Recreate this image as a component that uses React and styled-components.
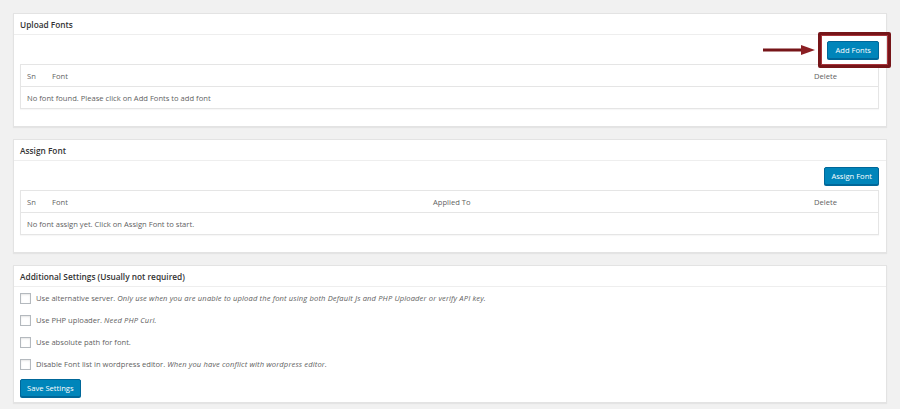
import React from 'react'
import styled, { createGlobalStyle } from 'styled-components'

const GlobalStyle = createGlobalStyle`
  html, body {
    margin: 0;
    background: #f1f1f1;
    font-family: "Open Sans", "Noto Sans", sans-serif;
    color: #444;
  }
`

const Page = styled.div`
  padding: 13px 13px 6px 13px;
  display: flex;
  flex-direction: column;
  gap: 12px;
`

const Panel = styled.div`
  background: #fff;
  border: 1px solid #e3e3e3;
  box-shadow: 0 1px 1px rgba(0, 0, 0, 0.05);
`

const PanelHeader = styled.div`
  height: 20px;
  display: flex;
  align-items: center;
  padding-left: 6px;
  border-bottom: 1px solid #eee;
  font-size: 8.3px;
  font-weight: 600;
  color: #333;
`

const PanelBody = styled.div`
  padding: ${(p) => p.$pad || '6px 7px 17px 6px'};
`

const Toolbar = styled.div`
  position: relative;
  display: flex;
  justify-content: flex-end;
  margin-bottom: 5px;
`

const Button = styled.button`
  height: 18px;
  padding: 0 ${(p) => p.$px || 7}px;
  background: #0085ba;
  border: 1px solid #006799;
  border-radius: 2px;
  box-shadow: 0 1px 0 #006799;
  color: #fff;
  font-family: inherit;
  font-size: 7.6px;
  line-height: 16px;
  cursor: pointer;
`

const Highlight = styled.div`
  position: absolute;
  right: -12px;
  top: -9px;
  width: 73px;
  height: 36px;
  border: 3px solid #761519;
  box-shadow: inset 0 0 0 1px #a8333a;
  border-radius: 2px;
  box-sizing: border-box;
  pointer-events: none;
`

const Arrow = styled.svg`
  position: absolute;
  right: 64px;
  top: 3px;
`

const Table = styled.div`
  border: 1px solid #e5e5e5;
  box-shadow: 0 1px 1px rgba(0, 0, 0, 0.03);
`

const Row = styled.div`
  display: grid;
  grid-template-columns: ${(p) => p.$cols};
  align-items: center;
  height: 21px;
  padding-left: 6px;
  font-size: 7.6px;
  color: #5f5f5f;
  & + & {
    border-top: 1px solid #e5e5e5;
  }
`

const Empty = styled.div`
  grid-column: 1 / -1;
`

const CheckRow = styled.label`
  display: flex;
  align-items: center;
  gap: 5px;
  height: 22px;
  font-size: 7.6px;
  color: #5f5f5f;
`

const Box = styled.span`
  width: 9px;
  height: 9px;
  border: 1px solid #b4b9be;
  background: #fff;
  box-shadow: inset 0 1px 2px rgba(0, 0, 0, 0.1);
  flex: none;
`

const Note = styled.em`
  letter-spacing: 0.13px;
`

const Footer = styled.div`
  display: flex;
  padding-top: 4px;
`

const settings = [
  ['Use alternative server.', 'Only use when you are unable to upload the font using both Default Js and PHP Uploader or verify API key.'],
  ['Use PHP uploader.', 'Need PHP Curl.'],
  ['Use absolute path for font.', ''],
  ['Disable Font list in wordpress editor.', 'When you have conflict with wordpress editor.'],
]

const App = () => (
  <>
    <GlobalStyle />
    <Page>
      <Panel>
        <PanelHeader>Upload Fonts</PanelHeader>
        <PanelBody>
          <Toolbar>
            <Arrow width="52" height="12" viewBox="0 0 52 12">
              <line x1="0" y1="6" x2="40" y2="6" stroke="#761519" strokeWidth="3" />
              <polygon points="38,1 52,6 38,11" fill="#8b1e23" />
            </Arrow>
            <Button $px={7}>Add Fonts</Button>
            <Highlight />
          </Toolbar>
          <Table>
            <Row $cols="25px 762px 1fr">
              <span>Sn</span>
              <span>Font</span>
              <span>Delete</span>
            </Row>
            <Row $cols="1fr">
              <Empty>No font found. Please click on Add Fonts to add font</Empty>
            </Row>
          </Table>
        </PanelBody>
      </Panel>

      <Panel>
        <PanelHeader>Assign Font</PanelHeader>
        <PanelBody>
          <Toolbar>
            <Button $px={6}>Assign Font</Button>
          </Toolbar>
          <Table>
            <Row $cols="25px 381px 381px 1fr">
              <span>Sn</span>
              <span>Font</span>
              <span>Applied To</span>
              <span>Delete</span>
            </Row>
            <Row $cols="1fr">
              <Empty>No font assign yet. Click on Assign Font to start.</Empty>
            </Row>
          </Table>
        </PanelBody>
      </Panel>

      <Panel>
        <PanelHeader>Additional Settings (Usually not required)</PanelHeader>
        <PanelBody $pad="0 6px 5px 6px">
          {settings.map(([label, note]) => (
            <CheckRow key={label}>
              <Box />
              <span>
                {label}
                {note && <> <Note>{note}</Note></>}
              </span>
            </CheckRow>
          ))}
          <Footer>
            <Button $px={6}>Save Settings</Button>
          </Footer>
        </PanelBody>
      </Panel>
    </Page>
  </>
)

export default App
